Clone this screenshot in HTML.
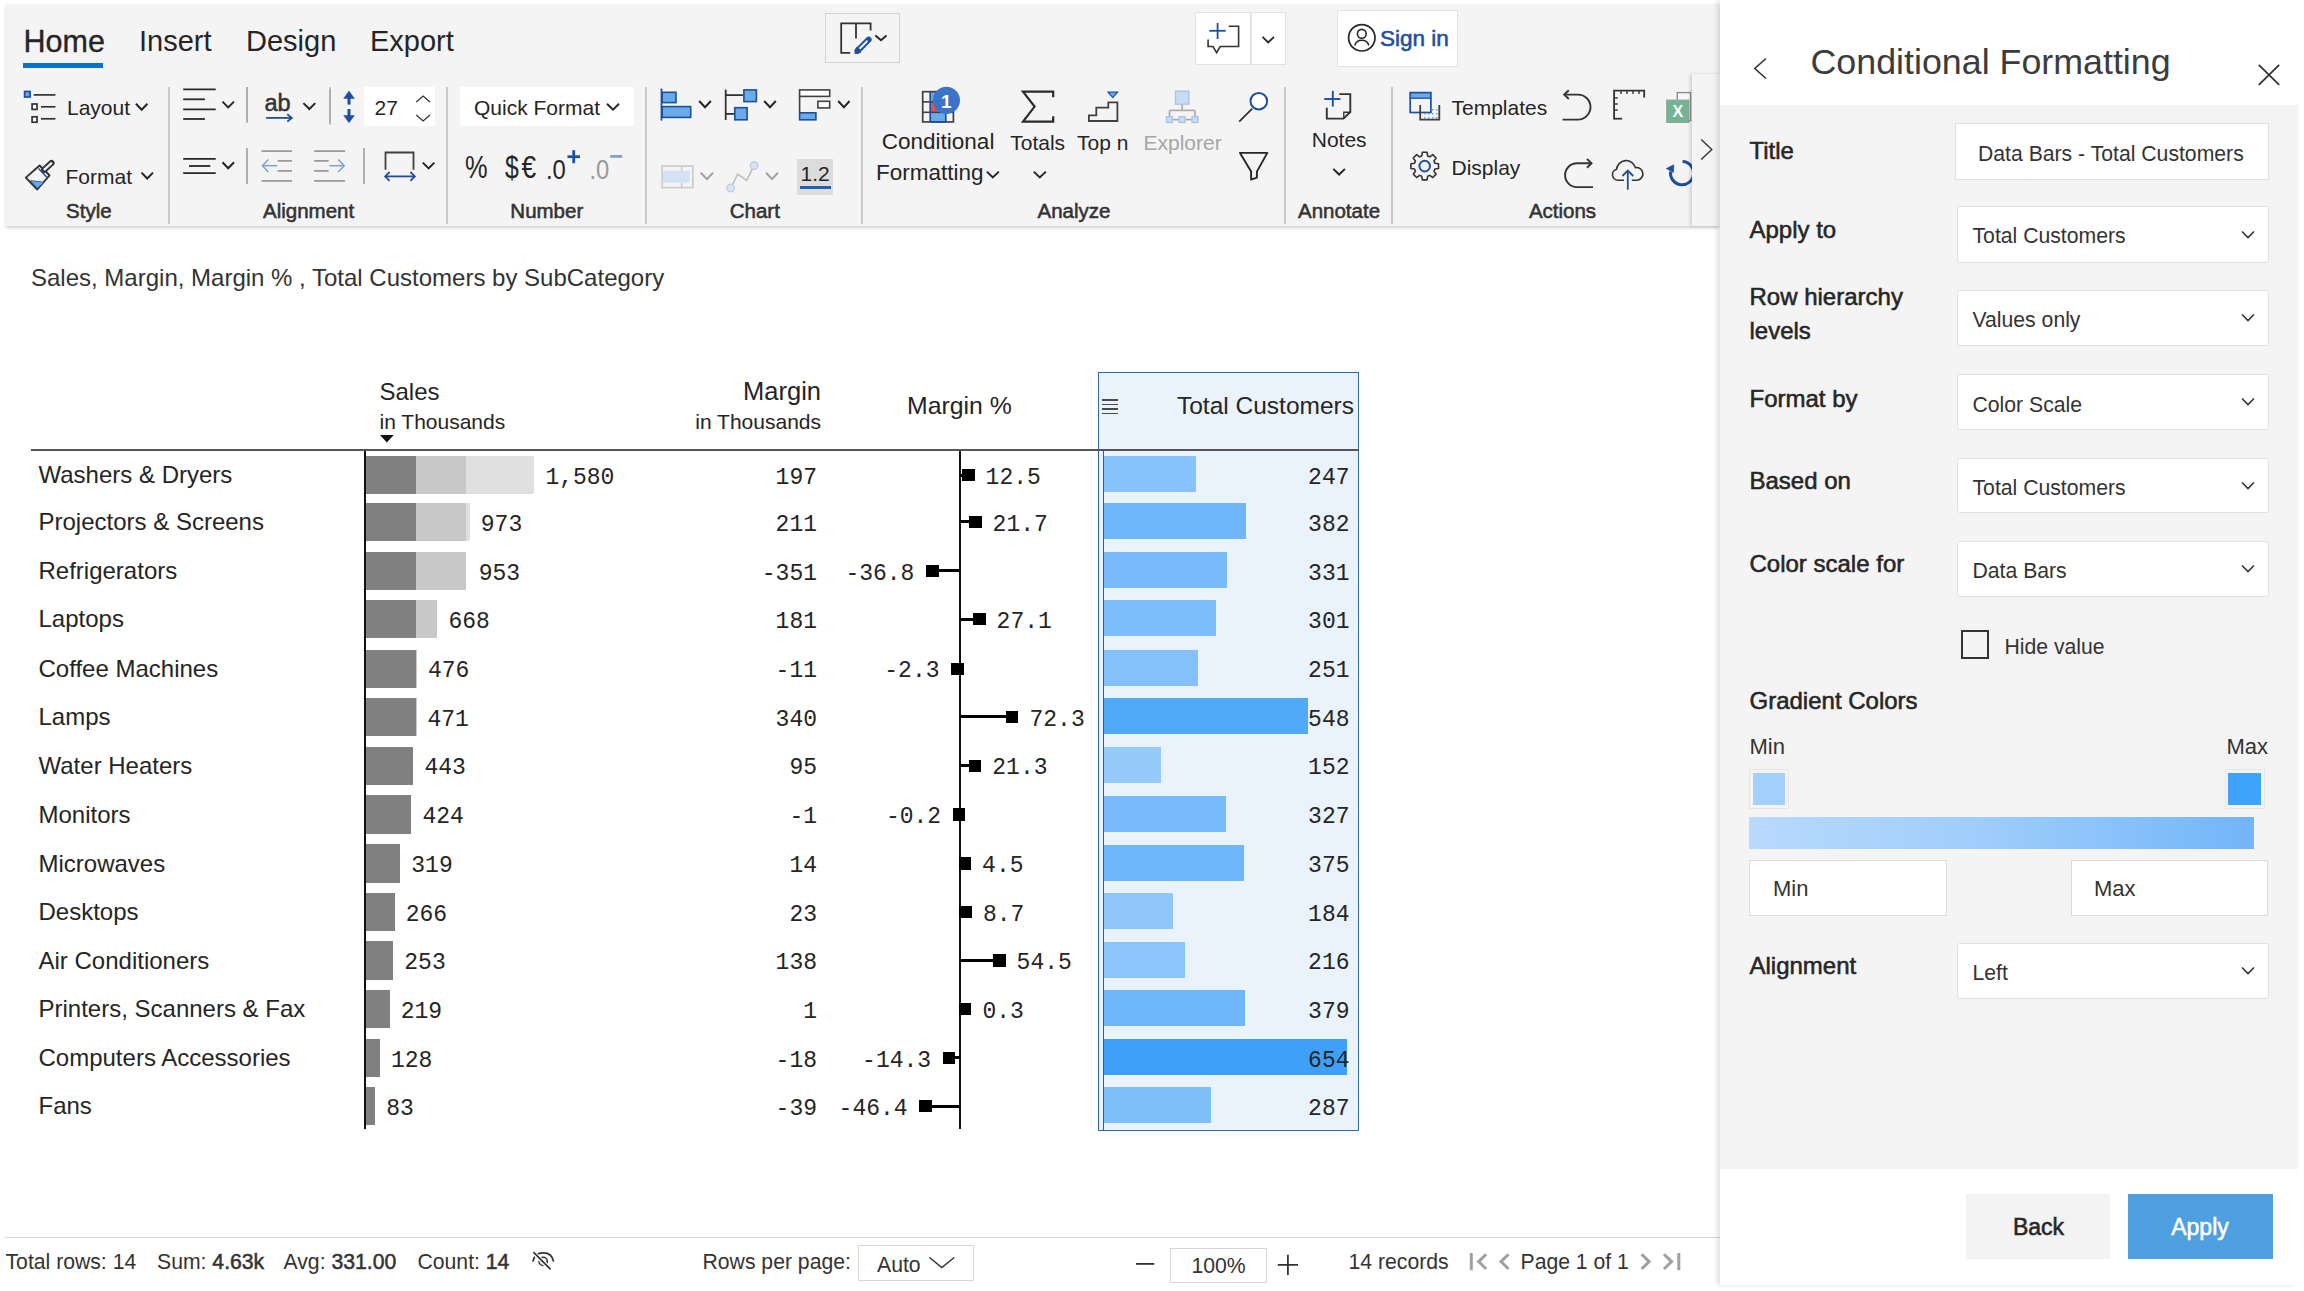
<!DOCTYPE html><html><head><meta charset="utf-8"><style>
html,body{margin:0;padding:0;width:2304px;height:1291px;overflow:hidden;background:#fff;font-family:'Liberation Sans', sans-serif;}
.t{position:absolute;line-height:1;white-space:nowrap;}
</style></head><body>
<div style="position:absolute;left:5.6px;top:4.0px;width:1713.9px;height:222.0px;background:#f4f4f4;box-shadow:0 2px 3px rgba(0,0,0,0.18);"></div>
<div class="t" style="left:23.5px;top:25.5px;font-size:30.5px;color:#252525;font-weight:400;font-family:'Liberation Sans', sans-serif;-webkit-text-stroke:0.35px #252525;">Home</div>
<div class="t" style="left:139.0px;top:26.8px;font-size:29px;color:#252525;font-weight:400;font-family:'Liberation Sans', sans-serif;">Insert</div>
<div class="t" style="left:246.0px;top:26.8px;font-size:29px;color:#252525;font-weight:400;font-family:'Liberation Sans', sans-serif;">Design</div>
<div class="t" style="left:370.0px;top:26.8px;font-size:29px;color:#252525;font-weight:400;font-family:'Liberation Sans', sans-serif;">Export</div>
<div style="position:absolute;left:23.3px;top:62.5px;width:79.7px;height:5.7px;background:#0873cf;"></div>
<div style="position:absolute;left:167.8px;top:87.0px;width:2.0px;height:137.0px;background:#c9c9c9;"></div>
<div style="position:absolute;left:446.1px;top:87.0px;width:2.0px;height:137.0px;background:#c9c9c9;"></div>
<div style="position:absolute;left:644.9px;top:87.0px;width:2.0px;height:137.0px;background:#c9c9c9;"></div>
<div style="position:absolute;left:861.0px;top:87.0px;width:2.0px;height:137.0px;background:#c9c9c9;"></div>
<div style="position:absolute;left:1284.3px;top:87.0px;width:2.0px;height:137.0px;background:#c9c9c9;"></div>
<div style="position:absolute;left:1391.1px;top:87.0px;width:2.0px;height:137.0px;background:#c9c9c9;"></div>
<div style="position:absolute;left:246.0px;top:87.0px;width:2.0px;height:35.4px;background:#c9c9c9;"></div>
<div style="position:absolute;left:329.2px;top:87.0px;width:2.0px;height:35.4px;background:#c9c9c9;"></div>
<div style="position:absolute;left:246.0px;top:148.4px;width:2.0px;height:35.2px;background:#c9c9c9;"></div>
<div style="position:absolute;left:363.0px;top:148.4px;width:2.0px;height:35.2px;background:#c9c9c9;"></div>
<div class="t" style="left:88.8px;transform:translateX(-50%);top:200.9px;font-size:20.5px;color:#333333;font-weight:400;font-family:'Liberation Sans', sans-serif;-webkit-text-stroke:0.55px #333333;">Style</div>
<div class="t" style="left:308.6px;transform:translateX(-50%);top:200.9px;font-size:20.5px;color:#333333;font-weight:400;font-family:'Liberation Sans', sans-serif;-webkit-text-stroke:0.55px #333333;">Alignment</div>
<div class="t" style="left:546.8px;transform:translateX(-50%);top:200.9px;font-size:20.5px;color:#333333;font-weight:400;font-family:'Liberation Sans', sans-serif;-webkit-text-stroke:0.55px #333333;">Number</div>
<div class="t" style="left:754.8px;transform:translateX(-50%);top:200.9px;font-size:20.5px;color:#333333;font-weight:400;font-family:'Liberation Sans', sans-serif;-webkit-text-stroke:0.55px #333333;">Chart</div>
<div class="t" style="left:1074.0px;transform:translateX(-50%);top:200.9px;font-size:20.5px;color:#333333;font-weight:400;font-family:'Liberation Sans', sans-serif;-webkit-text-stroke:0.55px #333333;">Analyze</div>
<div class="t" style="left:1339.0px;transform:translateX(-50%);top:200.9px;font-size:20.5px;color:#333333;font-weight:400;font-family:'Liberation Sans', sans-serif;-webkit-text-stroke:0.55px #333333;">Annotate</div>
<div class="t" style="left:1562.5px;transform:translateX(-50%);top:200.9px;font-size:20.5px;color:#333333;font-weight:400;font-family:'Liberation Sans', sans-serif;-webkit-text-stroke:0.55px #333333;">Actions</div>
<div class="t" style="left:67.0px;top:96.8px;font-size:21px;color:#252525;font-weight:400;font-family:'Liberation Sans', sans-serif;">Layout</div>
<div class="t" style="left:65.5px;top:165.8px;font-size:21px;color:#252525;font-weight:400;font-family:'Liberation Sans', sans-serif;">Format</div>
<div style="position:absolute;left:363.8px;top:86.7px;width:71.1px;height:39.6px;background:#fff;"></div>
<div class="t" style="left:374.5px;top:97.3px;font-size:21px;color:#252525;font-weight:400;font-family:'Liberation Sans', sans-serif;">27</div>
<div style="position:absolute;left:459.6px;top:86.7px;width:174.3px;height:39.6px;background:#fff;"></div>
<div class="t" style="left:474.0px;top:96.8px;font-size:21px;color:#252525;font-weight:400;font-family:'Liberation Sans', sans-serif;">Quick Format</div>
<div style="position:absolute;left:796.7px;top:158.9px;width:35.9px;height:35.9px;background:#dcdcdc;"></div>
<div class="t" style="left:800.5px;top:163.2px;font-size:21px;color:#252525;font-weight:400;font-family:'Liberation Sans', sans-serif;">1.2</div>
<div style="position:absolute;left:800.0px;top:186.0px;width:31.0px;height:2.5px;background:#1f5fb4;"></div>
<div class="t" style="left:938.1px;transform:translateX(-50%);top:130.7px;font-size:22.5px;color:#252525;font-weight:400;font-family:'Liberation Sans', sans-serif;">Conditional</div>
<div class="t" style="left:876.0px;top:162.0px;font-size:22.5px;color:#252525;font-weight:400;font-family:'Liberation Sans', sans-serif;">Formatting</div>
<div class="t" style="left:1037.7px;transform:translateX(-50%);top:131.9px;font-size:21px;color:#252525;font-weight:400;font-family:'Liberation Sans', sans-serif;">Totals</div>
<div class="t" style="left:1102.8px;transform:translateX(-50%);top:131.9px;font-size:21px;color:#252525;font-weight:400;font-family:'Liberation Sans', sans-serif;">Top n</div>
<div class="t" style="left:1182.6px;transform:translateX(-50%);top:131.9px;font-size:21px;color:#a6a6a6;font-weight:400;font-family:'Liberation Sans', sans-serif;">Explorer</div>
<div class="t" style="left:1339.2px;transform:translateX(-50%);top:129.3px;font-size:21px;color:#252525;font-weight:400;font-family:'Liberation Sans', sans-serif;">Notes</div>
<div class="t" style="left:1451.5px;top:96.8px;font-size:21px;color:#252525;font-weight:400;font-family:'Liberation Sans', sans-serif;">Templates</div>
<div class="t" style="left:1451.5px;top:156.7px;font-size:21px;color:#252525;font-weight:400;font-family:'Liberation Sans', sans-serif;">Display</div>
<div style="position:absolute;left:824.8px;top:13.0px;width:75.5px;height:50.0px;border:1.5px solid #d2d2d2;box-sizing:border-box;"></div>
<div style="position:absolute;left:1194.7px;top:11.7px;width:91.1px;height:53.4px;background:#fff;border:1.5px solid #e3e3e3;box-sizing:border-box;"></div>
<div style="position:absolute;left:1250.0px;top:11.7px;width:1.5px;height:53.4px;background:#e3e3e3;"></div>
<div style="position:absolute;left:1337.1px;top:10.4px;width:121.1px;height:56.8px;background:#fff;border:1.5px solid #e3e3e3;box-sizing:border-box;"></div>
<div class="t" style="left:1380.0px;top:28.4px;font-size:22.5px;color:#1e4fa0;font-weight:400;font-family:'Liberation Sans', sans-serif;-webkit-text-stroke:0.55px #1e4fa0;">Sign in</div>
<svg style="position:absolute;left:0;top:0" width="2304" height="1291" viewBox="0 0 2304 1291"><path d="M850.2 52.9 H841.2 V23.4 H870.6 V30.4" fill="none" stroke="#333333" stroke-width="1.8" /><line x1="856" y1="23.4" x2="856" y2="38.5" stroke="#333333" stroke-width="1.8" stroke-linecap="butt"/><line x1="857.5" y1="50.8" x2="868.6" y2="39.7" stroke="#1c4f9e" stroke-width="6.0" stroke-linecap="round"/><line x1="859.5" y1="48.8" x2="867.5" y2="40.8" stroke="#f4f4f4" stroke-width="2.0" stroke-linecap="butt"/><path d="M855 53.5 L856.5 47.5 L861 52 Z" fill="#1c4f9e" stroke="#1c4f9e" stroke-width="1" /><path d="M875.4 35.5 L881.0 40.3 L886.5 35.5" fill="none" stroke="#262626" stroke-width="2.0"/><line x1="1209.3" y1="30.8" x2="1225.7" y2="30.8" stroke="#1c4f9e" stroke-width="1.8" stroke-linecap="butt"/><line x1="1217.6" y1="23" x2="1217.6" y2="39" stroke="#1c4f9e" stroke-width="1.8" stroke-linecap="butt"/><path d="M1228.7 26.3 H1238.6 V46.5 H1220.2 L1216.6 52.6 L1213 46.5 H1208.1 V39.6" fill="none" stroke="#333333" stroke-width="1.6" /><path d="M1262.5 36.9 L1268.2 42.4 L1274.0 36.9" fill="none" stroke="#262626" stroke-width="1.8"/><circle cx="1361.8" cy="37.8" r="13.2" fill="none" stroke="#262626" stroke-width="1.7"/><circle cx="1361.8" cy="33.8" r="4.4" fill="none" stroke="#262626" stroke-width="1.6"/><path d="M1354.8 45.5 A7.2 6.8 0 0 1 1368.8 45.5" fill="none" stroke="#262626" stroke-width="1.6" /><rect x="24.6" y="91.5" width="5.5" height="5.5" fill="#6aaae8" stroke="#1c4f9e" stroke-width="1.7"/><line x1="33.6" y1="94.9" x2="55.4" y2="94.9" stroke="#333333" stroke-width="1.7" stroke-linecap="butt"/><rect x="32.1" y="104.0" width="4.9" height="5.4" fill="#fff" stroke="#333333" stroke-width="1.7"/><line x1="41" y1="106.8" x2="55.4" y2="106.8" stroke="#333333" stroke-width="1.7" stroke-linecap="butt"/><rect x="32.1" y="116.8" width="4.9" height="5.4" fill="#fff" stroke="#333333" stroke-width="1.7"/><line x1="41" y1="118.8" x2="55.4" y2="118.8" stroke="#333333" stroke-width="1.7" stroke-linecap="butt"/><path d="M135.9 103.8 L141.7 109.7 L147.4 103.8" fill="none" stroke="#262626" stroke-width="2.0"/><path d="M39.6 165.5 L49.5 175.3 L37.3 189.5 L25.8 177.6 Z" fill="none" stroke="#333333" stroke-width="1.9" stroke-linejoin="round"/><path d="M30.5 180.6 L44.2 182.2 L37.3 188.3 Z" fill="#6aaae8" stroke="#1c4f9e" stroke-width="0.8" /><line x1="44.2" y1="169.8" x2="51.5" y2="163.0" stroke="#333333" stroke-width="6.2" stroke-linecap="round"/><line x1="44.6" y1="169.4" x2="51.2" y2="163.3" stroke="#f4f4f4" stroke-width="2.4" stroke-linecap="round"/><line x1="38.6" y1="168.6" x2="46.6" y2="177.0" stroke="#1c4f9e" stroke-width="1.5" stroke-linecap="butt"/><path d="M141.5 172.6 L147.2 178.5 L153.0 172.6" fill="none" stroke="#262626" stroke-width="2.0"/><line x1="183.2" y1="89.3" x2="215.7" y2="89.3" stroke="#262626" stroke-width="1.8" stroke-linecap="butt"/><line x1="183.2" y1="99.3" x2="204.9" y2="99.3" stroke="#262626" stroke-width="1.8" stroke-linecap="butt"/><line x1="183.2" y1="109.3" x2="215.7" y2="109.3" stroke="#262626" stroke-width="1.8" stroke-linecap="butt"/><line x1="183.2" y1="119.0" x2="204.9" y2="119.0" stroke="#262626" stroke-width="1.8" stroke-linecap="butt"/><path d="M222.5 101.6 L228.2 107.4 L234.0 101.6" fill="none" stroke="#262626" stroke-width="2.0"/><line x1="183.2" y1="158.8" x2="215.7" y2="158.8" stroke="#262626" stroke-width="1.8" stroke-linecap="butt"/><line x1="189.0" y1="166.0" x2="210.3" y2="166.0" stroke="#262626" stroke-width="1.8" stroke-linecap="butt"/><line x1="183.2" y1="173.2" x2="215.7" y2="173.2" stroke="#262626" stroke-width="1.8" stroke-linecap="butt"/><path d="M222.5 162.3 L228.2 168.3 L234.0 162.3" fill="none" stroke="#262626" stroke-width="2.0"/><line x1="247" y1="87" x2="247" y2="122.8" stroke="#a8a8a8" stroke-width="1.6" stroke-linecap="butt"/><line x1="330.1" y1="88.8" x2="330.1" y2="124.6" stroke="#a8a8a8" stroke-width="1.6" stroke-linecap="butt"/><line x1="247" y1="148.3" x2="247" y2="183.7" stroke="#a8a8a8" stroke-width="1.6" stroke-linecap="butt"/><line x1="364.1" y1="148.3" x2="364.1" y2="183.7" stroke="#a8a8a8" stroke-width="1.6" stroke-linecap="butt"/><text x="264.5" y="110.7" font-family="Liberation Sans" font-size="23.5" fill="#333" stroke="#333" stroke-width="0.5">ab</text><line x1="266.1" y1="117.9" x2="291.5" y2="117.9" stroke="#1c4f9e" stroke-width="1.8" stroke-linecap="butt"/><path d="M287.3 114.2 L291.8 117.9 L287.3 121.6" fill="none" stroke="#1c4f9e" stroke-width="1.8" /><path d="M303.4 103.1 L309.4 109.0 L315.3 103.1" fill="none" stroke="#262626" stroke-width="2.0"/><line x1="349" y1="95.5" x2="349" y2="104.6" stroke="#1c4f9e" stroke-width="3.0" stroke-linecap="butt"/><line x1="349" y1="109" x2="349" y2="118.5" stroke="#1c4f9e" stroke-width="3.0" stroke-linecap="butt"/><path d="M343.7 98.5 L349 91 L354.4 98.5 Z" fill="#1c4f9e" stroke="#1c4f9e" stroke-width="0.5" /><path d="M343.7 115.5 L349 122.8 L354.4 115.5 Z" fill="#1c4f9e" stroke="#1c4f9e" stroke-width="0.5" /><path d="M416.3 102.1 L423.1 96.0 L430.0 102.1" fill="none" stroke="#333" stroke-width="1.3"/><path d="M416.3 114.9 L423.1 121.0 L430.0 114.9" fill="none" stroke="#333" stroke-width="1.3"/><line x1="261.5" y1="151.1" x2="292" y2="151.1" stroke="#9c9c9c" stroke-width="1.8" stroke-linecap="butt"/><line x1="277.7" y1="160.9" x2="292" y2="160.9" stroke="#9c9c9c" stroke-width="1.8" stroke-linecap="butt"/><line x1="277.7" y1="170.9" x2="292" y2="170.9" stroke="#9c9c9c" stroke-width="1.8" stroke-linecap="butt"/><line x1="261.5" y1="180.9" x2="292" y2="180.9" stroke="#9c9c9c" stroke-width="1.8" stroke-linecap="butt"/><line x1="262.8" y1="165.7" x2="277.3" y2="165.7" stroke="#7fa1d2" stroke-width="1.5" stroke-linecap="butt"/><path d="M268.4 159.4 L262.4 165.7 L268.4 172" fill="none" stroke="#7fa1d2" stroke-width="1.5" /><line x1="314.1" y1="151.1" x2="345.1" y2="151.1" stroke="#9c9c9c" stroke-width="1.8" stroke-linecap="butt"/><line x1="314.1" y1="160.9" x2="328.6" y2="160.9" stroke="#9c9c9c" stroke-width="1.8" stroke-linecap="butt"/><line x1="314.1" y1="170.9" x2="328.6" y2="170.9" stroke="#9c9c9c" stroke-width="1.8" stroke-linecap="butt"/><line x1="314.1" y1="180.9" x2="345.1" y2="180.9" stroke="#9c9c9c" stroke-width="1.8" stroke-linecap="butt"/><line x1="329.3" y1="165.7" x2="343.8" y2="165.7" stroke="#7fa1d2" stroke-width="1.5" stroke-linecap="butt"/><path d="M338.2 159.4 L344.2 165.7 L338.2 172" fill="none" stroke="#7fa1d2" stroke-width="1.5" /><path d="M385.5 169.7 V152.5 H413.5 V169.7" fill="none" stroke="#404040" stroke-width="1.8" /><line x1="385.5" y1="176.4" x2="414.5" y2="176.4" stroke="#1c4f9e" stroke-width="1.8" stroke-linecap="butt"/><path d="M389.6 172 L385.2 176.4 L389.6 180.8" fill="none" stroke="#1c4f9e" stroke-width="1.8" /><path d="M410.4 172 L414.8 176.4 L410.4 180.8" fill="none" stroke="#1c4f9e" stroke-width="1.8" /><path d="M422.8 162.6 L428.6 168.4 L434.3 162.6" fill="none" stroke="#262626" stroke-width="2.0"/><path d="M607.0 103.8 L613.0 109.7 L619.0 103.8" fill="none" stroke="#262626" stroke-width="2.0"/><text x="465" y="177.6" font-family="Liberation Sans" font-size="31" fill="#262626" transform="translate(465 177.6) scale(0.82 1) translate(-465 -177.6)">%</text><text x="505" y="177.6" font-family="Liberation Sans" font-size="31" fill="#262626" transform="translate(505 177.6) scale(0.8 1) translate(-505 -177.6)">$</text><text x="521.5" y="177.6" font-family="Liberation Sans" font-size="31" fill="#262626" transform="translate(521.5 177.6) scale(0.85 1) translate(-521.5 -177.6)">€</text><text x="546" y="179.2" font-family="Liberation Sans" font-size="28" fill="#262626" transform="translate(546 179.2) scale(0.85 1) translate(-546 -179.2)">.0</text><line x1="567.5" y1="156.7" x2="580" y2="156.7" stroke="#1c4f9e" stroke-width="2.8" stroke-linecap="butt"/><line x1="573.75" y1="150.2" x2="573.75" y2="163.2" stroke="#1c4f9e" stroke-width="2.8" stroke-linecap="butt"/><text x="589.5" y="179.2" font-family="Liberation Sans" font-size="28" fill="#9a9a9a" transform="translate(589.5 179.2) scale(0.85 1) translate(-589.5 -179.2)">.0</text><line x1="610.2" y1="156.4" x2="622.1" y2="156.4" stroke="#7fa1d2" stroke-width="2.8" stroke-linecap="butt"/><line x1="661.5" y1="88.6" x2="661.5" y2="120.6" stroke="#1c4f9e" stroke-width="1.8" stroke-linecap="butt"/><rect x="662.2" y="92.3" width="13.8" height="10.3" fill="#6aaae8" stroke="#1c4f9e" stroke-width="1.6"/><rect x="662.2" y="106.6" width="28.5" height="10.8" fill="#6aaae8" stroke="#1c4f9e" stroke-width="1.6"/><path d="M699.2 101.0 L705.0 107.2 L710.9 101.0" fill="none" stroke="#262626" stroke-width="2.0"/><line x1="725.7" y1="89.6" x2="725.7" y2="119.9" stroke="#333333" stroke-width="1.8" stroke-linecap="butt"/><line x1="725.7" y1="95.1" x2="743.1" y2="95.1" stroke="#333333" stroke-width="1.8" stroke-linecap="butt"/><line x1="725.7" y1="113.9" x2="734.0" y2="113.9" stroke="#333333" stroke-width="1.8" stroke-linecap="butt"/><rect x="743.9" y="89.9" width="12.5" height="11.7" fill="#6aaae8" stroke="#1c4f9e" stroke-width="1.6"/><rect x="734.8" y="107.7" width="12.3" height="12.1" fill="#6aaae8" stroke="#1c4f9e" stroke-width="1.6"/><path d="M764.2 101.0 L770.0 107.2 L775.8 101.0" fill="none" stroke="#262626" stroke-width="2.0"/><rect x="799.6" y="89.9" width="30.1" height="6.5" fill="#fff" stroke="#404040" stroke-width="1.6"/><line x1="799.6" y1="96.4" x2="799.6" y2="112.5" stroke="#404040" stroke-width="1.6" stroke-linecap="butt"/><rect x="817.9" y="101.3" width="11.8" height="6.6" fill="#fff" stroke="#404040" stroke-width="1.6"/><rect x="799.6" y="112.8" width="16.3" height="7.0" fill="#6aaae8" stroke="#1c4f9e" stroke-width="1.6"/><path d="M838.2 101.0 L843.9 107.2 L849.6 101.0" fill="none" stroke="#262626" stroke-width="2.0"/><rect x="662.1" y="166.1" width="30.8" height="21.5" fill="none" stroke="#cacaca" stroke-width="1.6"/><rect x="662.9" y="170.7" width="26.8" height="12" fill="#d3e3f5"/><line x1="681.7" y1="166.1" x2="681.7" y2="170.7" stroke="#cacaca" stroke-width="1.6" stroke-linecap="butt"/><line x1="681.7" y1="182.7" x2="681.7" y2="187.6" stroke="#cacaca" stroke-width="1.6" stroke-linecap="butt"/><path d="M700.7 172.7 L706.9 179.1 L713.0 172.7" fill="none" stroke="#a0a0a0" stroke-width="2.0"/><path d="M730.7 188.4 L737.7 174.1 L746.7 180.3 L754.1 165.3" fill="none" stroke="#bdbdbd" stroke-width="1.5" /><circle cx="730.7" cy="188.0" r="3.8" fill="#d6e4f3" stroke="#b9c9dc" stroke-width="1.2"/><circle cx="754.1" cy="165.6" r="3.8" fill="#d6e4f3" stroke="#b9c9dc" stroke-width="1.2"/><path d="M766.1 172.7 L772.0 179.1 L777.9 172.7" fill="none" stroke="#a0a0a0" stroke-width="2.0"/><rect x="930.2" y="91.7" width="15.6" height="30.2" fill="#6aaae8"/><rect x="931" y="102.8" width="6" height="8.8" fill="#e8524a"/><rect x="922.7" y="91.7" width="30.7" height="30.2" fill="none" stroke="#404040" stroke-width="1.7"/><line x1="922.7" y1="101.9" x2="953.4" y2="101.9" stroke="#404040" stroke-width="1.6" stroke-linecap="butt"/><line x1="922.7" y1="112.3" x2="953.4" y2="112.3" stroke="#404040" stroke-width="1.6" stroke-linecap="butt"/><line x1="930.2" y1="91.7" x2="930.2" y2="121.9" stroke="#1c4f9e" stroke-width="1.7" stroke-linecap="butt"/><line x1="945.8" y1="91.7" x2="945.8" y2="121.9" stroke="#1c4f9e" stroke-width="1.7" stroke-linecap="butt"/><line x1="930.2" y1="121.9" x2="945.8" y2="121.9" stroke="#1c4f9e" stroke-width="1.7" stroke-linecap="butt"/><circle cx="946.4" cy="100.3" r="13.6" fill="#3b73c9"/><text x="946.4" y="107.6" text-anchor="middle" font-family="Liberation Sans" font-weight="bold" font-size="19" fill="#fff">1</text><path d="M986.9 171.6 L992.8 177.4 L998.8 171.6" fill="none" stroke="#262626" stroke-width="2.0"/><path d="M1053.2 97.2 V91.6 H1023 L1034.6 106.6 L1023 121.6 H1053.2 V116.3" fill="none" stroke="#2a2a2a" stroke-width="2.2" /><path d="M1033.8 171.6 L1039.8 177.4 L1045.9 171.6" fill="none" stroke="#262626" stroke-width="2.0"/><path d="M1088.9 121 V115.4 H1096.3 V107.6 H1108.3 V102.4 H1117.4 V121 Z" fill="none" stroke="#404040" stroke-width="1.8" /><path d="M1108 92.2 H1117.6 L1112.8 97.6 Z" fill="#6aaae8" stroke="#1c4f9e" stroke-width="1.2" /><rect x="1175.5" y="91.1" width="13.3" height="13.1" fill="#c5dcf3" stroke="#a9c4e4" stroke-width="1.3"/><line x1="1182.1" y1="104.2" x2="1182.1" y2="110.4" stroke="#a8a8a8" stroke-width="1.6" stroke-linecap="butt"/><line x1="1169.5" y1="110.4" x2="1195" y2="110.4" stroke="#a8a8a8" stroke-width="1.6" stroke-linecap="butt"/><line x1="1169.5" y1="110.4" x2="1169.5" y2="116.5" stroke="#a8a8a8" stroke-width="1.6" stroke-linecap="butt"/><line x1="1195" y1="110.4" x2="1195" y2="116.5" stroke="#a8a8a8" stroke-width="1.6" stroke-linecap="butt"/><line x1="1169.5" y1="119.6" x2="1195" y2="119.6" stroke="#a8a8a8" stroke-width="1.6" stroke-linecap="butt"/><rect x="1166.5" y="116.7" width="6.0" height="5.8" fill="#c5dcf3" stroke="#a9c4e4" stroke-width="1.3"/><rect x="1179.1" y="116.7" width="6.0" height="5.8" fill="#c5dcf3" stroke="#a9c4e4" stroke-width="1.3"/><rect x="1192" y="116.7" width="6.0" height="5.8" fill="#c5dcf3" stroke="#a9c4e4" stroke-width="1.3"/><circle cx="1258.8" cy="101.2" r="8.3" fill="#fff" stroke="#1c4f9e" stroke-width="2"/><line x1="1252.2" y1="108.6" x2="1239.2" y2="121.6" stroke="#333333" stroke-width="1.8" stroke-linecap="butt"/><path d="M1240 152.9 H1267.3 L1256.9 171.6 V177.6 L1251.1 179.6 V171.6 Z" fill="none" stroke="#262626" stroke-width="1.9" stroke-linejoin="round"/><line x1="1324.2" y1="99" x2="1340.4" y2="99" stroke="#1c4f9e" stroke-width="1.9" stroke-linecap="butt"/><line x1="1332.8" y1="90.9" x2="1332.8" y2="106.6" stroke="#1c4f9e" stroke-width="1.9" stroke-linecap="butt"/><path d="M1339.3 94.1 H1350.3 V112 L1343.5 118.6 H1326.8 V107.7" fill="none" stroke="#333333" stroke-width="1.9" /><path d="M1350.3 112.2 H1343.8 V118.5" fill="none" stroke="#333333" stroke-width="1.4" /><path d="M1333.3 168.9 L1339.1 174.5 L1344.9 168.9" fill="none" stroke="#262626" stroke-width="2.0"/><rect x="1410.2" y="92.6" width="20.7" height="5.6" fill="#6aaae8"/><rect x="1410.2" y="92.6" width="20.7" height="19.9" fill="none" stroke="#1c4f9e" stroke-width="1.7"/><line x1="1410.2" y1="98.2" x2="1430.9" y2="98.2" stroke="#1c4f9e" stroke-width="1.3" stroke-linecap="butt"/><rect x="1432" y="109" width="1.6" height="1.6" fill="#7fa6d8"/><rect x="1436" y="109" width="1.6" height="1.6" fill="#7fa6d8"/><rect x="1424" y="113" width="1.6" height="1.6" fill="#7fa6d8"/><rect x="1428" y="113" width="1.6" height="1.6" fill="#7fa6d8"/><rect x="1432" y="113" width="1.6" height="1.6" fill="#7fa6d8"/><rect x="1436" y="113" width="1.6" height="1.6" fill="#7fa6d8"/><rect x="1424" y="117" width="1.6" height="1.6" fill="#7fa6d8"/><rect x="1428" y="117" width="1.6" height="1.6" fill="#7fa6d8"/><rect x="1432" y="117" width="1.6" height="1.6" fill="#7fa6d8"/><rect x="1436" y="117" width="1.6" height="1.6" fill="#7fa6d8"/><path d="M1420.2 105 V119.6 H1439.3 V105" fill="none" stroke="#404040" stroke-width="1.8" /><path d="M1564.2 94.6 H1578 A12.5 12.5 0 0 1 1578 119.6 H1562.5" fill="none" stroke="#333333" stroke-width="1.9" /><path d="M1568.8 90.2 L1564.2 94.6 L1568.8 99" fill="none" stroke="#333333" stroke-width="1.9" /><path d="M1614.1 119.6 V90.6 H1644.2 V97.4" fill="none" stroke="#333333" stroke-width="1.8" /><line x1="1614.1" y1="118.7" x2="1622.2" y2="118.7" stroke="#333333" stroke-width="1.8" stroke-linecap="butt"/><line x1="1621" y1="90.6" x2="1621" y2="94" stroke="#333333" stroke-width="1.4" stroke-linecap="butt"/><line x1="1627" y1="90.6" x2="1627" y2="94" stroke="#333333" stroke-width="1.4" stroke-linecap="butt"/><line x1="1633" y1="90.6" x2="1633" y2="94" stroke="#333333" stroke-width="1.4" stroke-linecap="butt"/><line x1="1639" y1="90.6" x2="1639" y2="94" stroke="#333333" stroke-width="1.4" stroke-linecap="butt"/><line x1="1614.1" y1="98" x2="1617.8" y2="98" stroke="#333333" stroke-width="1.4" stroke-linecap="butt"/><line x1="1614.1" y1="104" x2="1617.8" y2="104" stroke="#333333" stroke-width="1.4" stroke-linecap="butt"/><line x1="1614.1" y1="110" x2="1617.8" y2="110" stroke="#333333" stroke-width="1.4" stroke-linecap="butt"/><rect x="1677.3" y="92.6" width="13.3" height="27.9" fill="#f7f7f7" stroke="#8f8f8f" stroke-width="1.4"/><rect x="1666.7" y="100.1" width="22.2" height="22.3" fill="#72b596" stroke="#8fa096" stroke-width="1"/><text x="1677.8" y="117.4" text-anchor="middle" font-family="Liberation Sans" font-weight="bold" font-size="16" fill="#fff">X</text><path d="M1434.89 163.17 L1438.50 163.73 L1438.50 168.47 L1434.89 169.03 L1433.97 171.23 L1436.13 174.18 L1432.78 177.53 L1429.83 175.37 L1427.63 176.29 L1427.07 179.90 L1422.33 179.90 L1421.77 176.29 L1419.57 175.37 L1416.62 177.53 L1413.27 174.18 L1415.43 171.23 L1414.51 169.03 L1410.90 168.47 L1410.90 163.73 L1414.51 163.17 L1415.43 160.97 L1413.27 158.02 L1416.62 154.67 L1419.57 156.83 L1421.77 155.91 L1422.33 152.30 L1427.07 152.30 L1427.63 155.91 L1429.83 156.83 L1432.78 154.67 L1436.13 158.02 L1433.97 160.97 Z" fill="none" stroke="#333" stroke-width="1.6" stroke-linejoin="round"/><circle cx="1424.7" cy="166.1" r="5.3" fill="none" stroke="#1c4f9e" stroke-width="2"/><path d="M1591.5 163.3 H1577 A11.9 11.9 0 0 0 1577 187.1 H1593" fill="none" stroke="#333333" stroke-width="1.9" /><path d="M1587 158.9 L1591.5 163.3 L1587 167.7" fill="none" stroke="#333333" stroke-width="1.9" /><path d="M1624 180.2 H1618 A5.6 5.6 0 0 1 1616.6 169.2 A9.6 9.6 0 0 1 1635.4 167.6 A6.3 6.3 0 0 1 1637.6 180.2 H1631.8" fill="none" stroke="#333" stroke-width="1.6" /><line x1="1627.8" y1="189.7" x2="1627.8" y2="171" stroke="#1c4f9e" stroke-width="1.8" stroke-linecap="butt"/><path d="M1622.4 176 L1627.8 170.6 L1633.2 176" fill="none" stroke="#1c4f9e" stroke-width="1.8" /><path d="M1670.6 171.5 A11.6 11.6 0 1 0 1682.6 161.6" fill="none" stroke="#1c4f9e" stroke-width="3.0" /><path d="M1666.3 168.6 L1673.8 164.8 L1673.6 172.6 Z" fill="#1c4f9e" stroke="#1c4f9e" stroke-width="0.6" /></svg>
<div style="position:absolute;left:1692.0px;top:74.2px;width:27.5px;height:151.8px;background:#f4f4f4;box-shadow:-2px 0 3px rgba(0,0,0,0.15);"></div>
<svg style="position:absolute;left:0;top:0" width="2304" height="1291" viewBox="0 0 2304 1291"><path d="M1701.2 139.5 L1711.8 149.5 L1701.2 159.5" fill="none" stroke="#333" stroke-width="1.4"/></svg>
<div class="t" style="left:31.0px;top:266.4px;font-size:24px;color:#333;font-weight:400;font-family:'Liberation Sans', sans-serif;">Sales, Margin, Margin % , Total Customers by SubCategory</div>
<div style="position:absolute;left:1097.5px;top:371.6px;width:261.5px;height:759.9px;background:#eaf2fb;border:1.6px solid #2d6aae;box-sizing:border-box;"></div>
<div class="t" style="left:379.5px;top:379.8px;font-size:24px;color:#252525;font-weight:400;font-family:'Liberation Sans', sans-serif;">Sales</div>
<div class="t" style="left:379.5px;top:410.6px;font-size:21px;color:#252525;font-weight:400;font-family:'Liberation Sans', sans-serif;">in Thousands</div>
<svg style="position:absolute;left:379.8px;top:434.5px;overflow:visible;" width="14" height="8" viewBox="0 0 14 8"><path d="M0 0 L13.7 0 L6.85 7.5 Z" fill="#111"/></svg>
<div class="t" style="right:1483.0px;top:379.4px;font-size:25.5px;color:#252525;font-weight:400;font-family:'Liberation Sans', sans-serif;">Margin</div>
<div class="t" style="right:1483.0px;top:410.6px;font-size:21px;color:#252525;font-weight:400;font-family:'Liberation Sans', sans-serif;">in Thousands</div>
<div class="t" style="left:907.0px;top:393.9px;font-size:24.8px;color:#252525;font-weight:400;font-family:'Liberation Sans', sans-serif;">Margin %</div>
<div class="t" style="right:950.0px;top:393.8px;font-size:24.5px;color:#252525;font-weight:400;font-family:'Liberation Sans', sans-serif;">Total Customers</div>
<div style="position:absolute;left:1102.2px;top:399.4px;width:15.8px;height:1.3px;background:#4a4a4a;"></div>
<div style="position:absolute;left:1102.2px;top:403.8px;width:15.8px;height:1.3px;background:#4a4a4a;"></div>
<div style="position:absolute;left:1102.2px;top:408.3px;width:15.8px;height:1.3px;background:#4a4a4a;"></div>
<div style="position:absolute;left:1102.2px;top:412.8px;width:15.8px;height:1.3px;background:#4a4a4a;"></div>
<div style="position:absolute;left:31.0px;top:449.0px;width:1328.0px;height:2.0px;background:#555;"></div>
<div style="position:absolute;left:364.2px;top:451.0px;width:2.2px;height:677.5px;background:#111;"></div>
<div style="position:absolute;left:959.0px;top:451.0px;width:2.2px;height:677.5px;background:#111;"></div>
<div style="position:absolute;left:1102.7px;top:451.0px;width:1.4px;height:679.5px;background:#555;"></div>
<div class="t" style="left:38.5px;top:463.4px;font-size:24px;color:#252525;font-weight:400;font-family:'Liberation Sans', sans-serif;">Washers &amp; Dryers</div>
<div style="position:absolute;left:366.4px;top:456.1px;width:50.0px;height:38.4px;background:#808080;"></div>
<div style="position:absolute;left:416.4px;top:456.1px;width:50.0px;height:38.4px;background:#c8c8c8;"></div>
<div style="position:absolute;left:466.4px;top:456.1px;width:68.0px;height:38.4px;background:#e0e0e0;"></div>
<div class="t" style="left:545.4px;top:467.0px;font-size:23px;color:#252525;font-weight:400;font-family:'Liberation Mono', monospace;">1,580</div>
<div class="t" style="right:1487.0px;top:467.0px;font-size:23px;color:#252525;font-weight:400;font-family:'Liberation Mono', monospace;">197</div>
<div style="position:absolute;left:960.0px;top:473.6px;width:2.0px;height:3.0px;background:#000;"></div>
<div style="position:absolute;left:962.0px;top:469.1px;width:12.6px;height:12.3px;background:#000;"></div>
<div class="t" style="left:985.6px;top:467.0px;font-size:23px;color:#252525;font-weight:400;font-family:'Liberation Mono', monospace;">12.5</div>
<div style="position:absolute;left:1104.2px;top:456.4px;width:91.9px;height:36.0px;background:rgb(134, 194, 251);"></div>
<div class="t" style="right:954.5px;top:467.0px;font-size:23px;color:#252525;font-weight:400;font-family:'Liberation Mono', monospace;">247</div>
<div class="t" style="left:38.5px;top:510.2px;font-size:24px;color:#252525;font-weight:400;font-family:'Liberation Sans', sans-serif;">Projectors &amp; Screens</div>
<div style="position:absolute;left:366.4px;top:502.9px;width:50.0px;height:38.4px;background:#808080;"></div>
<div style="position:absolute;left:416.4px;top:502.9px;width:50.0px;height:38.4px;background:#c8c8c8;"></div>
<div style="position:absolute;left:466.4px;top:502.9px;width:3.4px;height:38.4px;background:#e0e0e0;"></div>
<div class="t" style="left:480.8px;top:513.8px;font-size:23px;color:#252525;font-weight:400;font-family:'Liberation Mono', monospace;">973</div>
<div class="t" style="right:1487.0px;top:513.8px;font-size:23px;color:#252525;font-weight:400;font-family:'Liberation Mono', monospace;">211</div>
<div style="position:absolute;left:960.0px;top:520.4px;width:9.0px;height:3.0px;background:#000;"></div>
<div style="position:absolute;left:969.0px;top:515.9px;width:12.6px;height:12.3px;background:#000;"></div>
<div class="t" style="left:992.6px;top:513.8px;font-size:23px;color:#252525;font-weight:400;font-family:'Liberation Mono', monospace;">21.7</div>
<div style="position:absolute;left:1104.2px;top:503.2px;width:142.1px;height:36.0px;background:rgb(110, 183, 251);"></div>
<div class="t" style="right:954.5px;top:513.8px;font-size:23px;color:#252525;font-weight:400;font-family:'Liberation Mono', monospace;">382</div>
<div class="t" style="left:38.5px;top:559.1px;font-size:24px;color:#252525;font-weight:400;font-family:'Liberation Sans', sans-serif;">Refrigerators</div>
<div style="position:absolute;left:366.4px;top:551.8px;width:50.0px;height:38.4px;background:#808080;"></div>
<div style="position:absolute;left:416.4px;top:551.8px;width:50.0px;height:38.4px;background:#c8c8c8;"></div>
<div class="t" style="left:478.7px;top:562.7px;font-size:23px;color:#252525;font-weight:400;font-family:'Liberation Mono', monospace;">953</div>
<div class="t" style="right:1487.0px;top:562.7px;font-size:23px;color:#252525;font-weight:400;font-family:'Liberation Mono', monospace;">-351</div>
<div style="position:absolute;left:938.2px;top:569.3px;width:21.8px;height:3.0px;background:#000;"></div>
<div style="position:absolute;left:926.2px;top:564.8px;width:12.6px;height:12.3px;background:#000;"></div>
<div class="t" style="right:1389.6px;top:562.7px;font-size:23px;color:#252525;font-weight:400;font-family:'Liberation Mono', monospace;">-36.8</div>
<div style="position:absolute;left:1104.2px;top:552.1px;width:123.1px;height:36.0px;background:rgb(119, 187, 251);"></div>
<div class="t" style="right:954.5px;top:562.7px;font-size:23px;color:#252525;font-weight:400;font-family:'Liberation Mono', monospace;">331</div>
<div class="t" style="left:38.5px;top:607.4px;font-size:24px;color:#252525;font-weight:400;font-family:'Liberation Sans', sans-serif;">Laptops</div>
<div style="position:absolute;left:366.4px;top:600.1px;width:50.0px;height:38.4px;background:#808080;"></div>
<div style="position:absolute;left:416.4px;top:600.1px;width:21.0px;height:38.4px;background:#c8c8c8;"></div>
<div class="t" style="left:448.4px;top:611.0px;font-size:23px;color:#252525;font-weight:400;font-family:'Liberation Mono', monospace;">668</div>
<div class="t" style="right:1487.0px;top:611.0px;font-size:23px;color:#252525;font-weight:400;font-family:'Liberation Mono', monospace;">181</div>
<div style="position:absolute;left:960.0px;top:617.6px;width:13.0px;height:3.0px;background:#000;"></div>
<div style="position:absolute;left:973.0px;top:613.1px;width:12.6px;height:12.3px;background:#000;"></div>
<div class="t" style="left:996.6px;top:611.0px;font-size:23px;color:#252525;font-weight:400;font-family:'Liberation Mono', monospace;">27.1</div>
<div style="position:absolute;left:1104.2px;top:600.4px;width:112.0px;height:36.0px;background:rgb(124, 190, 251);"></div>
<div class="t" style="right:954.5px;top:611.0px;font-size:23px;color:#252525;font-weight:400;font-family:'Liberation Mono', monospace;">301</div>
<div class="t" style="left:38.5px;top:656.8px;font-size:24px;color:#252525;font-weight:400;font-family:'Liberation Sans', sans-serif;">Coffee Machines</div>
<div style="position:absolute;left:366.4px;top:649.5px;width:50.0px;height:38.4px;background:#808080;"></div>
<div style="position:absolute;left:416.4px;top:649.5px;width:0.6px;height:38.4px;background:#c8c8c8;"></div>
<div class="t" style="left:428.0px;top:660.4px;font-size:23px;color:#252525;font-weight:400;font-family:'Liberation Mono', monospace;">476</div>
<div class="t" style="right:1487.0px;top:660.4px;font-size:23px;color:#252525;font-weight:400;font-family:'Liberation Mono', monospace;">-11</div>
<div style="position:absolute;left:963.3px;top:667.0px;width:-3.3px;height:3.0px;background:#000;"></div>
<div style="position:absolute;left:951.3px;top:662.5px;width:12.6px;height:12.3px;background:#000;"></div>
<div class="t" style="right:1364.5px;top:660.4px;font-size:23px;color:#252525;font-weight:400;font-family:'Liberation Mono', monospace;">-2.3</div>
<div style="position:absolute;left:1104.2px;top:649.8px;width:93.4px;height:36.0px;background:rgb(133, 194, 251);"></div>
<div class="t" style="right:954.5px;top:660.4px;font-size:23px;color:#252525;font-weight:400;font-family:'Liberation Mono', monospace;">251</div>
<div class="t" style="left:38.5px;top:705.2px;font-size:24px;color:#252525;font-weight:400;font-family:'Liberation Sans', sans-serif;">Lamps</div>
<div style="position:absolute;left:366.4px;top:697.9px;width:50.0px;height:38.4px;background:#808080;"></div>
<div style="position:absolute;left:416.4px;top:697.9px;width:0.1px;height:38.4px;background:#c8c8c8;"></div>
<div class="t" style="left:427.5px;top:708.8px;font-size:23px;color:#252525;font-weight:400;font-family:'Liberation Mono', monospace;">471</div>
<div class="t" style="right:1487.0px;top:708.8px;font-size:23px;color:#252525;font-weight:400;font-family:'Liberation Mono', monospace;">340</div>
<div style="position:absolute;left:960.0px;top:715.4px;width:45.9px;height:3.0px;background:#000;"></div>
<div style="position:absolute;left:1005.9px;top:710.9px;width:12.6px;height:12.3px;background:#000;"></div>
<div class="t" style="left:1029.5px;top:708.8px;font-size:23px;color:#252525;font-weight:400;font-family:'Liberation Mono', monospace;">72.3</div>
<div style="position:absolute;left:1104.2px;top:698.2px;width:203.9px;height:36.0px;background:rgb(81, 169, 250);"></div>
<div class="t" style="right:954.5px;top:708.8px;font-size:23px;color:#252525;font-weight:400;font-family:'Liberation Mono', monospace;">548</div>
<div class="t" style="left:38.5px;top:753.8px;font-size:24px;color:#252525;font-weight:400;font-family:'Liberation Sans', sans-serif;">Water Heaters</div>
<div style="position:absolute;left:366.4px;top:746.5px;width:47.1px;height:38.4px;background:#808080;"></div>
<div class="t" style="left:424.5px;top:757.4px;font-size:23px;color:#252525;font-weight:400;font-family:'Liberation Mono', monospace;">443</div>
<div class="t" style="right:1487.0px;top:757.4px;font-size:23px;color:#252525;font-weight:400;font-family:'Liberation Mono', monospace;">95</div>
<div style="position:absolute;left:960.0px;top:764.0px;width:8.7px;height:3.0px;background:#000;"></div>
<div style="position:absolute;left:968.7px;top:759.5px;width:12.6px;height:12.3px;background:#000;"></div>
<div class="t" style="left:992.3px;top:757.4px;font-size:23px;color:#252525;font-weight:400;font-family:'Liberation Mono', monospace;">21.3</div>
<div style="position:absolute;left:1104.2px;top:746.8px;width:56.5px;height:36.0px;background:rgb(150, 202, 251);"></div>
<div class="t" style="right:954.5px;top:757.4px;font-size:23px;color:#252525;font-weight:400;font-family:'Liberation Mono', monospace;">152</div>
<div class="t" style="left:38.5px;top:802.6px;font-size:24px;color:#252525;font-weight:400;font-family:'Liberation Sans', sans-serif;">Monitors</div>
<div style="position:absolute;left:366.4px;top:795.3px;width:45.1px;height:38.4px;background:#808080;"></div>
<div class="t" style="left:422.5px;top:806.2px;font-size:23px;color:#252525;font-weight:400;font-family:'Liberation Mono', monospace;">424</div>
<div class="t" style="right:1487.0px;top:806.2px;font-size:23px;color:#252525;font-weight:400;font-family:'Liberation Mono', monospace;">-1</div>
<div style="position:absolute;left:964.9px;top:812.8px;width:-4.9px;height:3.0px;background:#000;"></div>
<div style="position:absolute;left:952.9px;top:808.3px;width:12.6px;height:12.3px;background:#000;"></div>
<div class="t" style="right:1362.9px;top:806.2px;font-size:23px;color:#252525;font-weight:400;font-family:'Liberation Mono', monospace;">-0.2</div>
<div style="position:absolute;left:1104.2px;top:795.6px;width:121.6px;height:36.0px;background:rgb(120, 187, 251);"></div>
<div class="t" style="right:954.5px;top:806.2px;font-size:23px;color:#252525;font-weight:400;font-family:'Liberation Mono', monospace;">327</div>
<div class="t" style="left:38.5px;top:851.6px;font-size:24px;color:#252525;font-weight:400;font-family:'Liberation Sans', sans-serif;">Microwaves</div>
<div style="position:absolute;left:366.4px;top:844.3px;width:33.9px;height:38.4px;background:#808080;"></div>
<div class="t" style="left:411.3px;top:855.2px;font-size:23px;color:#252525;font-weight:400;font-family:'Liberation Mono', monospace;">319</div>
<div class="t" style="right:1487.0px;top:855.2px;font-size:23px;color:#252525;font-weight:400;font-family:'Liberation Mono', monospace;">14</div>
<div style="position:absolute;left:960.0px;top:861.8px;width:-1.5px;height:3.0px;background:#000;"></div>
<div style="position:absolute;left:958.5px;top:857.3px;width:12.6px;height:12.3px;background:#000;"></div>
<div class="t" style="left:982.1px;top:855.2px;font-size:23px;color:#252525;font-weight:400;font-family:'Liberation Mono', monospace;">4.5</div>
<div style="position:absolute;left:1104.2px;top:844.6px;width:139.5px;height:36.0px;background:rgb(111, 183, 251);"></div>
<div class="t" style="right:954.5px;top:855.2px;font-size:23px;color:#252525;font-weight:400;font-family:'Liberation Mono', monospace;">375</div>
<div class="t" style="left:38.5px;top:899.9px;font-size:24px;color:#252525;font-weight:400;font-family:'Liberation Sans', sans-serif;">Desktops</div>
<div style="position:absolute;left:366.4px;top:892.6px;width:28.3px;height:38.4px;background:#808080;"></div>
<div class="t" style="left:405.7px;top:903.5px;font-size:23px;color:#252525;font-weight:400;font-family:'Liberation Mono', monospace;">266</div>
<div class="t" style="right:1487.0px;top:903.5px;font-size:23px;color:#252525;font-weight:400;font-family:'Liberation Mono', monospace;">23</div>
<div style="position:absolute;left:960.0px;top:910.1px;width:-0.6px;height:3.0px;background:#000;"></div>
<div style="position:absolute;left:959.4px;top:905.6px;width:12.6px;height:12.3px;background:#000;"></div>
<div class="t" style="left:983.0px;top:903.5px;font-size:23px;color:#252525;font-weight:400;font-family:'Liberation Mono', monospace;">8.7</div>
<div style="position:absolute;left:1104.2px;top:892.9px;width:68.4px;height:36.0px;background:rgb(144, 199, 251);"></div>
<div class="t" style="right:954.5px;top:903.5px;font-size:23px;color:#252525;font-weight:400;font-family:'Liberation Mono', monospace;">184</div>
<div class="t" style="left:38.5px;top:948.7px;font-size:24px;color:#252525;font-weight:400;font-family:'Liberation Sans', sans-serif;">Air Conditioners</div>
<div style="position:absolute;left:366.4px;top:941.4px;width:26.9px;height:38.4px;background:#808080;"></div>
<div class="t" style="left:404.3px;top:952.3px;font-size:23px;color:#252525;font-weight:400;font-family:'Liberation Mono', monospace;">253</div>
<div class="t" style="right:1487.0px;top:952.3px;font-size:23px;color:#252525;font-weight:400;font-family:'Liberation Mono', monospace;">138</div>
<div style="position:absolute;left:960.0px;top:958.9px;width:33.0px;height:3.0px;background:#000;"></div>
<div style="position:absolute;left:993.0px;top:954.4px;width:12.6px;height:12.3px;background:#000;"></div>
<div class="t" style="left:1016.6px;top:952.3px;font-size:23px;color:#252525;font-weight:400;font-family:'Liberation Mono', monospace;">54.5</div>
<div style="position:absolute;left:1104.2px;top:941.7px;width:80.4px;height:36.0px;background:rgb(139, 197, 251);"></div>
<div class="t" style="right:954.5px;top:952.3px;font-size:23px;color:#252525;font-weight:400;font-family:'Liberation Mono', monospace;">216</div>
<div class="t" style="left:38.5px;top:997.2px;font-size:24px;color:#252525;font-weight:400;font-family:'Liberation Sans', sans-serif;">Printers, Scanners &amp; Fax</div>
<div style="position:absolute;left:366.4px;top:989.9px;width:23.3px;height:38.4px;background:#808080;"></div>
<div class="t" style="left:400.7px;top:1000.8px;font-size:23px;color:#252525;font-weight:400;font-family:'Liberation Mono', monospace;">219</div>
<div class="t" style="right:1487.0px;top:1000.8px;font-size:23px;color:#252525;font-weight:400;font-family:'Liberation Mono', monospace;">1</div>
<div style="position:absolute;left:960.0px;top:1007.4px;width:-1.2px;height:3.0px;background:#000;"></div>
<div style="position:absolute;left:958.8px;top:1002.9px;width:12.6px;height:12.3px;background:#000;"></div>
<div class="t" style="left:982.4px;top:1000.8px;font-size:23px;color:#252525;font-weight:400;font-family:'Liberation Mono', monospace;">0.3</div>
<div style="position:absolute;left:1104.2px;top:990.2px;width:141.0px;height:36.0px;background:rgb(111, 183, 251);"></div>
<div class="t" style="right:954.5px;top:1000.8px;font-size:23px;color:#252525;font-weight:400;font-family:'Liberation Mono', monospace;">379</div>
<div class="t" style="left:38.5px;top:1046.2px;font-size:24px;color:#252525;font-weight:400;font-family:'Liberation Sans', sans-serif;">Computers Accessories</div>
<div style="position:absolute;left:366.4px;top:1038.9px;width:13.6px;height:38.4px;background:#808080;"></div>
<div class="t" style="left:391.0px;top:1049.8px;font-size:23px;color:#252525;font-weight:400;font-family:'Liberation Mono', monospace;">128</div>
<div class="t" style="right:1487.0px;top:1049.8px;font-size:23px;color:#252525;font-weight:400;font-family:'Liberation Mono', monospace;">-18</div>
<div style="position:absolute;left:954.9px;top:1056.4px;width:5.1px;height:3.0px;background:#000;"></div>
<div style="position:absolute;left:942.9px;top:1051.9px;width:12.6px;height:12.3px;background:#000;"></div>
<div class="t" style="right:1372.9px;top:1049.8px;font-size:23px;color:#252525;font-weight:400;font-family:'Liberation Mono', monospace;">-14.3</div>
<div style="position:absolute;left:1104.2px;top:1039.2px;width:243.3px;height:36.0px;background:rgb(63, 160, 250);"></div>
<div class="t" style="right:954.5px;top:1049.8px;font-size:23px;color:#252525;font-weight:400;font-family:'Liberation Mono', monospace;">654</div>
<div class="t" style="left:38.5px;top:1094.3px;font-size:24px;color:#252525;font-weight:400;font-family:'Liberation Sans', sans-serif;">Fans</div>
<div style="position:absolute;left:366.4px;top:1087.0px;width:8.8px;height:38.4px;background:#808080;"></div>
<div class="t" style="left:386.2px;top:1097.9px;font-size:23px;color:#252525;font-weight:400;font-family:'Liberation Mono', monospace;">83</div>
<div class="t" style="right:1487.0px;top:1097.9px;font-size:23px;color:#252525;font-weight:400;font-family:'Liberation Mono', monospace;">-39</div>
<div style="position:absolute;left:931.4px;top:1104.5px;width:28.6px;height:3.0px;background:#000;"></div>
<div style="position:absolute;left:919.4px;top:1100.0px;width:12.6px;height:12.3px;background:#000;"></div>
<div class="t" style="right:1396.4px;top:1097.9px;font-size:23px;color:#252525;font-weight:400;font-family:'Liberation Mono', monospace;">-46.4</div>
<div style="position:absolute;left:1104.2px;top:1087.3px;width:106.8px;height:36.0px;background:rgb(127, 191, 251);"></div>
<div class="t" style="right:954.5px;top:1097.9px;font-size:23px;color:#252525;font-weight:400;font-family:'Liberation Mono', monospace;">287</div>
<div style="position:absolute;left:5.0px;top:1236.5px;width:1715.0px;height:1.5px;background:#d8d8d8;"></div>
<div class="t" style="left:5.5px;top:1251.3px;font-size:21.2px;color:#333;font-weight:400;font-family:'Liberation Sans', sans-serif;">Total rows: 14</div>
<div class="t" style="left:157.0px;top:1251.3px;font-size:21.2px;color:#333;font-weight:400;font-family:'Liberation Sans', sans-serif;">Sum: <span style="-webkit-text-stroke:0.5px #333;">4.63k</span></div>
<div class="t" style="left:283.5px;top:1251.3px;font-size:21.2px;color:#333;font-weight:400;font-family:'Liberation Sans', sans-serif;">Avg: <span style="-webkit-text-stroke:0.5px #333;">331.00</span></div>
<div class="t" style="left:417.5px;top:1251.3px;font-size:21.2px;color:#333;font-weight:400;font-family:'Liberation Sans', sans-serif;">Count: <span style="-webkit-text-stroke:0.5px #333;">14</span></div>
<div class="t" style="left:702.5px;top:1251.3px;font-size:21.2px;color:#333;font-weight:400;font-family:'Liberation Sans', sans-serif;">Rows per page:</div>
<div style="position:absolute;left:858.0px;top:1245.3px;width:115.5px;height:35.6px;border:1.5px solid #d6d6d6;box-sizing:border-box;"></div>
<div class="t" style="left:877.0px;top:1254.1px;font-size:21.2px;color:#333;font-weight:400;font-family:'Liberation Sans', sans-serif;">Auto</div>
<div style="position:absolute;left:1169.6px;top:1248.1px;width:97.9px;height:35.0px;border:1.5px solid #d6d6d6;box-sizing:border-box;"></div>
<div class="t" style="left:1218.5px;transform:translateX(-50%);top:1255.0px;font-size:21.2px;color:#333;font-weight:400;font-family:'Liberation Sans', sans-serif;">100%</div>
<div class="t" style="left:1348.5px;top:1250.8px;font-size:21.2px;color:#333;font-weight:400;font-family:'Liberation Sans', sans-serif;">14 records</div>
<div class="t" style="left:1520.5px;top:1250.8px;font-size:21.2px;color:#333;font-weight:400;font-family:'Liberation Sans', sans-serif;">Page 1 of 1</div>
<div style="position:absolute;left:1719.5px;top:0.0px;width:578.1px;height:1284.5px;background:#fff;box-shadow:-3px 0 5px rgba(0,0,0,0.12);"></div>
<div style="position:absolute;left:1719.5px;top:104.6px;width:578.1px;height:1064.3px;background:#f4f4f4;"></div>
<div class="t" style="left:1810.5px;top:45.0px;font-size:35.8px;color:#3c3c3c;font-weight:400;font-family:'Liberation Sans', sans-serif;">Conditional Formatting</div>
<div class="t" style="left:1749.5px;top:138.7px;font-size:24px;color:#262626;font-weight:400;font-family:'Liberation Sans', sans-serif;-webkit-text-stroke:0.55px #262626;">Title</div>
<div class="t" style="left:1749.5px;top:218.1px;font-size:24px;color:#262626;font-weight:400;font-family:'Liberation Sans', sans-serif;-webkit-text-stroke:0.55px #262626;">Apply to</div>
<div class="t" style="left:1749.5px;top:285.1px;font-size:24px;color:#262626;font-weight:400;font-family:'Liberation Sans', sans-serif;-webkit-text-stroke:0.55px #262626;">Row hierarchy</div>
<div class="t" style="left:1749.5px;top:318.5px;font-size:24px;color:#262626;font-weight:400;font-family:'Liberation Sans', sans-serif;-webkit-text-stroke:0.55px #262626;">levels</div>
<div class="t" style="left:1749.5px;top:386.6px;font-size:24px;color:#262626;font-weight:400;font-family:'Liberation Sans', sans-serif;-webkit-text-stroke:0.55px #262626;">Format by</div>
<div class="t" style="left:1749.5px;top:469.3px;font-size:24px;color:#262626;font-weight:400;font-family:'Liberation Sans', sans-serif;-webkit-text-stroke:0.55px #262626;">Based on</div>
<div class="t" style="left:1749.5px;top:552.0px;font-size:24px;color:#262626;font-weight:400;font-family:'Liberation Sans', sans-serif;-webkit-text-stroke:0.55px #262626;">Color scale for</div>
<div class="t" style="left:1749.5px;top:689.0px;font-size:24px;color:#262626;font-weight:400;font-family:'Liberation Sans', sans-serif;-webkit-text-stroke:0.55px #262626;">Gradient Colors</div>
<div class="t" style="left:1749.5px;top:953.8px;font-size:24px;color:#262626;font-weight:400;font-family:'Liberation Sans', sans-serif;-webkit-text-stroke:0.55px #262626;">Alignment</div>
<div style="position:absolute;left:1955.2px;top:123.3px;width:313.7px;height:56.6px;background:#fff;border:1.5px solid #e1e1e1;box-sizing:border-box;"></div>
<div class="t" style="left:1978.0px;top:143.3px;font-size:21.2px;color:#333;font-weight:400;font-family:'Liberation Sans', sans-serif;">Data Bars - Total Customers</div>
<div style="position:absolute;left:1956.5px;top:206.4px;width:312.4px;height:56.3px;background:#fff;border:1.5px solid #e1e1e1;border-radius:3px;box-sizing:border-box;"></div>
<div class="t" style="left:1972.5px;top:224.7px;font-size:21.2px;color:#333;font-weight:400;font-family:'Liberation Sans', sans-serif;">Total Customers</div>
<svg style="position:absolute;left:2240.5px;top:229.6px;overflow:visible;" width="14" height="9" viewBox="0 0 14 9"><path d="M1 1.5 L7 7.5 L13 1.5" fill="none" stroke="#333" stroke-width="1.6"/></svg>
<div style="position:absolute;left:1956.5px;top:290.0px;width:312.4px;height:55.8px;background:#fff;border:1.5px solid #e1e1e1;border-radius:3px;box-sizing:border-box;"></div>
<div class="t" style="left:1972.5px;top:308.5px;font-size:21.2px;color:#333;font-weight:400;font-family:'Liberation Sans', sans-serif;">Values only</div>
<svg style="position:absolute;left:2240.5px;top:312.9px;overflow:visible;" width="14" height="9" viewBox="0 0 14 9"><path d="M1 1.5 L7 7.5 L13 1.5" fill="none" stroke="#333" stroke-width="1.6"/></svg>
<div style="position:absolute;left:1956.5px;top:374.4px;width:312.4px;height:56.1px;background:#fff;border:1.5px solid #e1e1e1;border-radius:3px;box-sizing:border-box;"></div>
<div class="t" style="left:1972.5px;top:393.9px;font-size:21.2px;color:#333;font-weight:400;font-family:'Liberation Sans', sans-serif;">Color Scale</div>
<svg style="position:absolute;left:2240.5px;top:397.4px;overflow:visible;" width="14" height="9" viewBox="0 0 14 9"><path d="M1 1.5 L7 7.5 L13 1.5" fill="none" stroke="#333" stroke-width="1.6"/></svg>
<div style="position:absolute;left:1956.5px;top:457.6px;width:312.4px;height:55.9px;background:#fff;border:1.5px solid #e1e1e1;border-radius:3px;box-sizing:border-box;"></div>
<div class="t" style="left:1972.5px;top:477.1px;font-size:21.2px;color:#333;font-weight:400;font-family:'Liberation Sans', sans-serif;">Total Customers</div>
<svg style="position:absolute;left:2240.5px;top:480.6px;overflow:visible;" width="14" height="9" viewBox="0 0 14 9"><path d="M1 1.5 L7 7.5 L13 1.5" fill="none" stroke="#333" stroke-width="1.6"/></svg>
<div style="position:absolute;left:1956.5px;top:540.6px;width:312.4px;height:56.1px;background:#fff;border:1.5px solid #e1e1e1;border-radius:3px;box-sizing:border-box;"></div>
<div class="t" style="left:1972.5px;top:559.8px;font-size:21.2px;color:#333;font-weight:400;font-family:'Liberation Sans', sans-serif;">Data Bars</div>
<svg style="position:absolute;left:2240.5px;top:563.7px;overflow:visible;" width="14" height="9" viewBox="0 0 14 9"><path d="M1 1.5 L7 7.5 L13 1.5" fill="none" stroke="#333" stroke-width="1.6"/></svg>
<div style="position:absolute;left:1956.5px;top:943.0px;width:312.4px;height:56.3px;background:#fff;border:1.5px solid #e1e1e1;border-radius:3px;box-sizing:border-box;"></div>
<div class="t" style="left:1972.5px;top:961.6px;font-size:21.2px;color:#333;font-weight:400;font-family:'Liberation Sans', sans-serif;">Left</div>
<svg style="position:absolute;left:2240.5px;top:966.1px;overflow:visible;" width="14" height="9" viewBox="0 0 14 9"><path d="M1 1.5 L7 7.5 L13 1.5" fill="none" stroke="#333" stroke-width="1.6"/></svg>
<div style="position:absolute;left:1960.8px;top:630.0px;width:28.7px;height:28.5px;border:2px solid #333;box-sizing:border-box;"></div>
<div class="t" style="left:2004.5px;top:635.7px;font-size:21.2px;color:#333;font-weight:400;font-family:'Liberation Sans', sans-serif;">Hide value</div>
<div class="t" style="left:1749.5px;top:735.9px;font-size:22px;color:#333;font-weight:400;font-family:'Liberation Sans', sans-serif;">Min</div>
<div class="t" style="right:36.0px;top:735.9px;font-size:22px;color:#333;font-weight:400;font-family:'Liberation Sans', sans-serif;">Max</div>
<div style="position:absolute;left:1748.9px;top:769.0px;width:40.0px;height:39.8px;border:1.5px solid #e6e6e6;box-sizing:border-box;"></div>
<div style="position:absolute;left:1752.8px;top:773.0px;width:32.2px;height:32.0px;background:#a3d0fd;"></div>
<div style="position:absolute;left:2224.5px;top:769.0px;width:40.7px;height:39.8px;border:1.5px solid #e6e6e6;box-sizing:border-box;"></div>
<div style="position:absolute;left:2228.0px;top:773.0px;width:33.0px;height:32.0px;background:#3fa2fb;"></div>
<div style="position:absolute;left:1748.8px;top:816.9px;width:505.6px;height:32.5px;background:linear-gradient(to right,#b8dafd 0%,#a0cdfb 45%,#8bc3fa 70%,#72b5f9 100%);"></div>
<div style="position:absolute;left:1748.8px;top:859.5px;width:198.4px;height:56.9px;background:#fff;border:1.5px solid #dadada;box-sizing:border-box;"></div>
<div class="t" style="left:1773.0px;top:878.3px;font-size:22px;color:#333;font-weight:400;font-family:'Liberation Sans', sans-serif;">Min</div>
<div style="position:absolute;left:2070.6px;top:859.5px;width:197.9px;height:56.9px;background:#fff;border:1.5px solid #dadada;box-sizing:border-box;"></div>
<div class="t" style="left:2094.0px;top:878.3px;font-size:22px;color:#333;font-weight:400;font-family:'Liberation Sans', sans-serif;">Max</div>
<div style="position:absolute;left:1966.0px;top:1194.4px;width:144.2px;height:64.4px;background:#f3f3f3;"></div>
<div class="t" style="left:2038.5px;transform:translateX(-50%);top:1216.3px;font-size:23px;color:#262626;font-weight:400;font-family:'Liberation Sans', sans-serif;-webkit-text-stroke:0.55px #262626;">Back</div>
<div style="position:absolute;left:2128.0px;top:1194.4px;width:144.7px;height:64.4px;background:#4fa0e0;"></div>
<div class="t" style="left:2200.0px;transform:translateX(-50%);top:1216.3px;font-size:23px;color:#fff;font-weight:400;font-family:'Liberation Sans', sans-serif;-webkit-text-stroke:0.55px #fff;">Apply</div>
<svg style="position:absolute;left:0;top:0" width="2304" height="1291" viewBox="0 0 2304 1291"><path d="M1766 58.5 L1754.8 68.5 L1766 78.5" fill="none" stroke="#333" stroke-width="1.6"/><path d="M2258.8 64.8 L2279.2 84.8 M2279.2 64.8 L2258.8 84.8" fill="none" stroke="#333" stroke-width="1.8"/><path d="M532.8 1261.6 C534 1255, 538.5 1252.8, 543.2 1252.8 C548 1252.8, 552.4 1255, 553.6 1261.6" fill="none" stroke="#333" stroke-width="1.7"/><circle cx="543.2" cy="1261.4" r="4.1" fill="none" stroke="#333" stroke-width="1.6"/><path d="M532.6 1251.4 L551.2 1270.2" fill="none" stroke="#fff" stroke-width="4.2"/><path d="M533.4 1252.2 L550.6 1269.4" fill="none" stroke="#333" stroke-width="1.7"/><path d="M1136 1263.9 H1154.2" fill="none" stroke="#333" stroke-width="1.8"/><path d="M1277.8 1264.8 H1298 M1287.9 1254.7 V1274.9" fill="none" stroke="#333" stroke-width="1.8"/><path d="M929.5 1257.5 L941.8 1267.5 L954.2 1257.5" fill="none" stroke="#333" stroke-width="1.5"/><path d="M1471.3 1253 V1270.2" fill="none" stroke="#a0a0a0" stroke-width="3.0"/><path d="M1486.2 1254.2 L1478.6 1261.6 L1486.2 1269" fill="none" stroke="#a0a0a0" stroke-width="3.0"/><path d="M1508.6 1254.2 L1501 1261.6 L1508.6 1269" fill="none" stroke="#a0a0a0" stroke-width="3.0"/><path d="M1641.6 1254.2 L1649.2 1261.6 L1641.6 1269" fill="none" stroke="#a0a0a0" stroke-width="3.0"/><path d="M1664 1254.2 L1671.6 1261.6 L1664 1269" fill="none" stroke="#a0a0a0" stroke-width="3.0"/><path d="M1678.8 1253 V1270.2" fill="none" stroke="#a0a0a0" stroke-width="3.0"/></svg>
</body></html>
